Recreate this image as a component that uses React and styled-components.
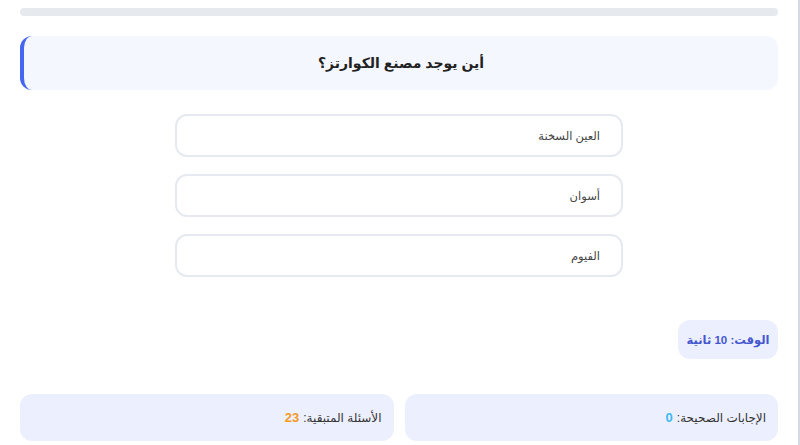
import React from "react";
import styled, { createGlobalStyle } from "styled-components";

const Global = createGlobalStyle`
  html, body { margin: 0; padding: 0; background: #ffffff; }
  body { font-family: "Liberation Sans", "DejaVu Sans", "Noto Sans", sans-serif; }
  * { box-sizing: border-box; }
`;

const Page = styled.div`
  direction: rtl;
  width: 800px;
  height: 445px;
  padding: 8px 20px 0 20px;
  border-right: 2px solid #d5d9e6;
  display: flex;
  flex-direction: column;
  overflow: hidden;
`;

const Progress = styled.div`
  height: 8px;
  border-radius: 4px;
  background: #e6e9ee;
  overflow: hidden;
`;

const QuestionCard = styled.div`
  margin-top: 20px;
  height: 54px;
  border-radius: 12px;
  background: #f4f7fe;
  border-left: 4px solid #4566f0;
  display: flex;
  align-items: center;
  justify-content: center;
  font-size: 14px;
  font-weight: 700;
  color: #222;
`;

const Options = styled.div`
  margin-top: 24px;
  display: flex;
  flex-direction: column;
  align-items: center;
  gap: 17px;
`;

const Option = styled.button`
  direction: rtl;
  width: 448px;
  height: 43px;
  border: 2px solid #e6e9ef;
  border-radius: 12px;
  background: #ffffff;
  text-align: right;
  padding: 0 21px;
  font-family: inherit;
  font-size: 11.5px;
  color: #444;
  cursor: pointer;
`;

const TimerRow = styled.div`
  margin-top: 43px;
  display: flex;
  justify-content: flex-start;
`;

const Timer = styled.div`
  width: 100px;
  height: 39px;
  border-radius: 12px;
  background: #eceffe;
  color: #4457cf;
  font-weight: 700;
  font-size: 11.5px;
  display: flex;
  align-items: center;
  justify-content: center;
`;

const Stats = styled.div`
  margin-top: 35px;
  display: grid;
  grid-template-columns: 1fr 1fr;
  gap: 11px;
`;

const Stat = styled.div`
  height: 47px;
  border-radius: 12px;
  background: #eceffe;
  display: flex;
  align-items: center;
  padding: 0 12px;
  font-size: 12px;
  color: #333;
`;

const Num = styled.span`
  font-weight: 700;
  font-size: 13px;
  color: ${(p) => p.$color};
  margin-right: 4px;
`;

export default function App() {
  const options = ["العين السخنة", "أسوان", "الفيوم"];
  return (
    <>
      <Global />
      <Page>
        <Progress />
        <QuestionCard>أين يوجد مصنع الكوارتز؟</QuestionCard>
        <Options>
          {options.map((o) => (
            <Option key={o}>{o}</Option>
          ))}
        </Options>
        <TimerRow>
          <Timer>الوقت: 10 ثانية</Timer>
        </TimerRow>
        <Stats>
          <Stat>
            الإجابات الصحيحة:<Num $color="#3fb8f0">0</Num>
          </Stat>
          <Stat>
            الأسئلة المتبقية:<Num $color="#f59a23">23</Num>
          </Stat>
        </Stats>
      </Page>
    </>
  );
}
